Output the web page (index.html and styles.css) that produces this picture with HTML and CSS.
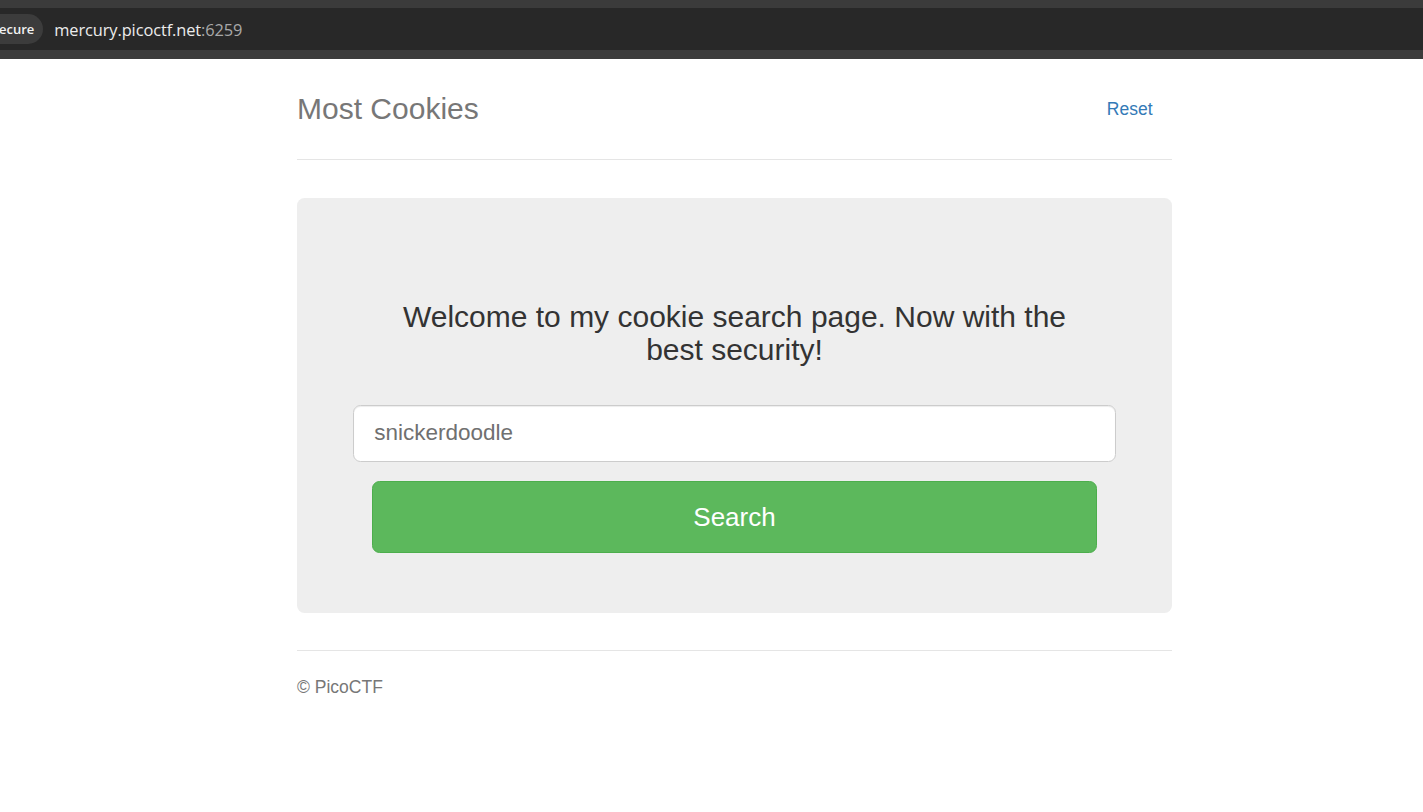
FILE: index.html
```html
<!DOCTYPE html>
<html lang="en">
<head>
<meta charset="utf-8">
<title>Most Cookies</title>
<link rel="stylesheet" href="styles.css">
</head>
<body>
<div class="chrome">
  <div class="chrome-top"></div>
  <div class="chrome-bar">
    <span class="secure-pill">Not secure</span>
    <span class="url"><span class="url-host">mercury.picoctf.net</span><span class="url-port">:6259</span></span>
  </div>
  <div class="chrome-bottom"></div>
</div>
<div class="viewport">
  <div class="container">
    <div class="header">
      <h3 class="brand">Most Cookies</h3>
      <nav class="nav-pills">
        <a class="nav-link" href="#">Reset</a>
      </nav>
    </div>
    <div class="jumbotron">
      <h3 class="welcome">Welcome to my cookie search page. Now with the best security!</h3>
      <form class="search-form">
        <div class="row">
          <input class="form-control" type="text" placeholder="snickerdoodle">
        </div>
        <button class="btn-search" type="button">Search</button>
      </form>
    </div>
    <footer class="footer">
      <p>© PicoCTF</p>
    </footer>
  </div>
</div>
</body>
</html>
```
FILE: styles.css
```css
* { box-sizing: border-box; }
html, body { margin: 0; padding: 0; background: #fff; }
body {
  font-family: "Liberation Sans", Arial, Helvetica, sans-serif;
  color: #333;
  overflow: hidden;
}

.chrome { background: #3b3b3b; }
.chrome-top { height: 8px; background: #3b3b3b; }
.chrome-bar {
  height: 42px;
  background: #282828;
  display: flex;
  align-items: center;
}
.chrome-bottom { height: 9px; background: #3b3b3b; }
.secure-pill {
  height: 30px;
  display: flex;
  align-items: center;
  margin-left: -46px;
  padding: 0 9px 0 12px;
  background: #3c3c3c;
  border-radius: 15px;
  color: #f2f2f2;
  font-family: "Open Sans", "Noto Sans", sans-serif;
  font-weight: 600;
  font-size: 13px;
}
.url {
  margin-left: 11px;
  font-family: "Open Sans", "Noto Sans", sans-serif;
  font-size: 16.4px;
  letter-spacing: -0.1px;
}
.url-host { color: #ececec; }
.url-port { color: #a8a8a8; }

.viewport { padding-left: 46px; }
.container {
  width: 875px;
  margin: 0 auto;
  padding-top: 25px;
}

.header {
  display: flex;
  justify-content: space-between;
  align-items: flex-start;
  padding-bottom: 25px;
  border-bottom: 1px solid #e5e5e5;
}
.brand {
  margin: 0;
  font-size: 30px;
  font-weight: 500;
  line-height: 50px;
  color: #777;
}
.nav-pills { display: flex; }
.nav-link {
  display: block;
  padding: 12.5px 19.5px 12.5px 18.75px;
  font-size: 17.5px;
  line-height: 25px;
  color: #337ab7;
  text-decoration: none;
}

.jumbotron {
  margin-top: 37.5px;
  margin-bottom: 37.5px;
  padding: 60px 75px 59.5px;
  background: #eee;
  border-radius: 7.5px;
  text-align: center;
}
.welcome {
  margin: 42.5px 0 0;
  font-size: 30px;
  font-weight: 500;
  line-height: 33px;
  color: #333;
}
.search-form { margin-top: 38.5px; }
.row { margin: 0 -18.75px; }
.form-control {
  display: block;
  width: 100%;
  height: 57.5px;
  padding: 12.5px 20px;
  font-family: "Liberation Sans", Arial, sans-serif;
  font-size: 22.5px;
  line-height: 1.3333;
  color: #555;
  background: #fff;
  border: 1px solid #ccc;
  border-radius: 7.5px;
  box-shadow: inset 0 1px 1px rgba(0,0,0,.075);
  outline: none;
}
.form-control::placeholder { color: #707070; opacity: 1; }
.btn-search {
  display: block;
  width: 100%;
  height: 72px;
  margin-top: 19px;
  background: #5cb85c;
  border: 1px solid #4cae4c;
  border-radius: 7.5px;
  color: #fff;
  font-family: "Liberation Sans", Arial, sans-serif;
  font-size: 26px;
  cursor: pointer;
}

.footer {
  padding-top: 24.4px;
  border-top: 1px solid #e5e5e5;
  color: #777;
}
.footer p {
  margin: 0;
  font-size: 17.5px;
  line-height: 25px;
}
```
